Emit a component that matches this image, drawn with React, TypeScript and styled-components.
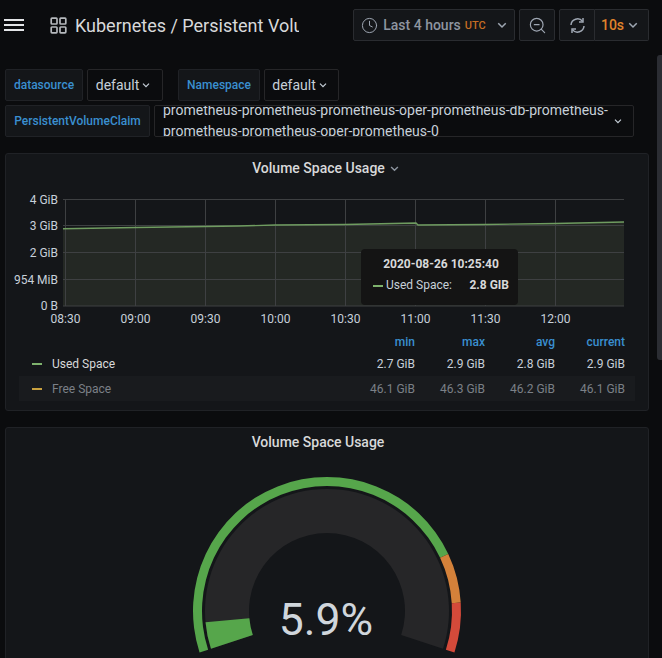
import { FC } from "react";
import styled, { createGlobalStyle } from "styled-components";
import { Clock, ZoomOut } from "lucide-react";

const GlobalStyle = createGlobalStyle`
    html, body {
        margin:0;
        height:100%;
        background:#0b0c0e;
        overflow:hidden;
    }
    body {
        font-family:Roboto, "Liberation Sans", sans-serif;
        color:#c7d0d9;
    }
`

const Page = styled.div`
    width:662px;
    height:658px;
    overflow:hidden;
    position:relative;
    box-sizing:border-box;
    padding:9px 13px 0 5px;
`

const ScrollThumb = styled.div`
    position:absolute;
    right:0;
    top:55px;
    width:5px;
    height:305px;
    border-radius:3px 0 0 3px;
    background:#2b2d33;
`

const NavBar = styled.header`
    display:flex;
    align-items:center;
    height:32px;
`

const MenuButton = styled.div`
    width:20px;
    height:12px;
    margin:-1px 26px 0 -1px;
    border-top:2px solid #e4e6e8;
    border-bottom:2px solid #e4e6e8;
    box-sizing:border-box;
    position:relative;
    &::after {
        content:"";
        position:absolute;
        left:0;
        right:0;
        top:3px;
        height:2px;
        background:#e4e6e8;
    }
`

const Crumb = styled.h1`
    margin:2px 0 0 8px;
    width:224px;
    overflow:hidden;
    white-space:nowrap;
    font-size:18px;
    font-weight:400;
    line-height:32px;
    color:#d8d9da;
`

const NavActions = styled.div`
    display:flex;
    gap:4px;
    margin-left:auto;
`

const NavButton = styled.div<{ width: number; trim?: number }>`
    width:${(props)=>props.width}px;
    height:32px;
    box-sizing:border-box;
    padding-right:${(props)=>props.trim ?? 0}px;
    display:flex;
    align-items:center;
    justify-content:center;
    background:#141619;
    border:1px solid #2a2c30;
    border-radius:2px;
    color:#9fa7b3;
    font-size:14px;
    font-weight:500;
`

const TimeText = styled.span`
    color:#8e95a0;
    margin-left:5px;
`

const UtcText = styled.span`
    color:#c56d23;
    font-size:11px;
    font-weight:500;
    margin:1px 0 0 4px;
`

const PickerCaret = styled.span`
    display:flex;
    margin-left:11px;
`

const RefreshGroup = styled.div`
    display:flex;
    & > div:first-child {
        border-radius:2px 0 0 2px;
    }
    & > div:last-child {
        border-left:none;
        border-radius:0 2px 2px 0;
    }
`

const IntervalText = styled.span`
    color:#e0842b;
    font-weight:500;
    font-size:14px;
    margin-right:4px;
`

const VariableArea = styled.section`
    display:flex;
    flex-direction:column;
    gap:4px;
    margin-top:28px;
    margin-bottom:16px;
`

const VariableRow = styled.div`
    display:flex;
`

const VariableLabel = styled.div<{ width: number }>`
    width:${(props)=>props.width}px;
    height:32px;
    box-sizing:border-box;
    margin-right:4px;
    display:flex;
    align-items:center;
    justify-content:center;
    background:#141619;
    border:1px solid #202226;
    border-radius:2px;
    color:#3a8fd0;
    font-size:12px;
    font-weight:500;
`

const VariableSelect = styled.div<{ width: number; after?: number }>`
    width:${(props)=>props.width}px;
    height:32px;
    box-sizing:border-box;
    margin-right:${(props)=>props.after ?? 0}px;
    padding-right:4px;
    display:flex;
    align-items:center;
    justify-content:center;
    gap:3px;
    background:#0b0c0e;
    border:1px solid #262628;
    border-radius:2px;
    color:#c7d0d9;
    font-size:14px;
`

const LongSelect = styled(VariableSelect)`
    justify-content:space-between;
    padding:0 11px 0 8px;
    overflow:hidden;
`

const LongValue = styled.div`
    width:452px;
    line-height:21px;
    font-size:14px;
`

const Panel = styled.section<{ height: number }>`
    height:${(props)=>props.height}px;
    box-sizing:border-box;
    margin-bottom:16px;
    background:#141619;
    border:1px solid #202226;
    border-radius:3px;
    width:644px;
`

const PanelTitle = styled.div<{ inset: number }>`
    height:28px;
    display:flex;
    align-items:center;
    justify-content:center;
    gap:5px;
    font-size:14px;
    font-weight:500;
    color:#d8d9da;
    padding-right:${(props)=>props.inset}px;
`

const ChartBox = styled.div`
    position:relative;
    height:147px;
`

const ChartSvg = styled.svg`
    display:block;
    width:642px;
    height:147px;
    font-family:Roboto, sans-serif;
    font-size:12px;
`

const Tooltip = styled.div`
    position:absolute;
    left:355px;
    top:67px;
    width:157px;
    height:56px;
    box-sizing:border-box;
    padding:7px 9px 0 12px;
    background:#141414;
    border-radius:4px;
    font-size:12px;
`

const TooltipTime = styled.div`
    text-align:center;
    font-weight:700;
    color:#d8d9da;
    line-height:17px;
    margin-bottom:4px;
`

const TooltipRow = styled.div`
    display:flex;
    align-items:center;
    line-height:17px;
    color:#c7d0d9;
`

const TooltipValue = styled.span`
    margin-left:auto;
    font-weight:700;
    color:#d8d9da;
`

const SeriesDash = styled.i<{ color: string }>`
    display:block;
    width:10px;
    height:2px;
    margin-right:3px;
    background:${(props)=>props.color};
`

const Legend = styled.div`
    margin:0 13px;
    font-size:12px;
`

const LegendRow = styled.div<{ striped?: boolean; dim?: boolean; rowHeight: number }>`
    display:grid;
    grid-template-columns:1fr 70px 70px 70px 70px;
    align-items:center;
    height:${(props)=>props.rowHeight}px;
    padding:0 10px 0 13px;
    background:${(props)=>props.striped ? "#191b1e" : "transparent"};
    color:${(props)=>props.dim ? "#7b8087" : "#d8d9da"};
    text-align:right;
`

const LegendName = styled.div`
    display:flex;
    align-items:center;
    text-align:left;
`

const LegendDash = styled(SeriesDash)`
    margin-right:10px;
`

const LegendHead = styled.div`
    color:#3a8fd0;
    font-weight:500;
    margin-top:4px;
`

const LegendCell = styled.div<{ dim?: boolean }>`
    color:${(props)=>props.dim ? "#7b8087" : "#c7d0d9"};
`

const GaugeSvg = styled.svg`
    display:block;
    width:642px;
    height:205px;
    font-family:Roboto, sans-serif;
`

const Chevron:FC<{ size?: number; color?: string }> = ({size=8,color="currentColor"})=>{
    return (
        <svg width={size} height={size} viewBox="0 0 8 8" fill="none">
            <path d="M1 2.6 L4 5.6 L7 2.6" stroke={color} strokeWidth="1.2" />
        </svg>
    )
}

const GridIcon:FC = ()=>{
    return (
        <svg width="17" height="17" viewBox="0 0 17 17" fill="none" stroke="#b5b8bc" strokeWidth="1.7">
            <rect x="1.2" y="1.2" width="5.8" height="5.8" rx="0.8" />
            <rect x="10" y="1.2" width="5.8" height="5.8" rx="0.8" />
            <rect x="1.2" y="10" width="5.8" height="5.8" rx="0.8" />
            <rect x="10" y="10" width="5.8" height="5.8" rx="0.8" />
        </svg>
    )
}

const SyncIcon:FC = ()=>{
    return (
        <svg width="17" height="17" viewBox="0 0 17 17" fill="none" stroke="#9fa7b3" strokeWidth="1.5">
            <path d="M2 8 A6.5 6.5 0 0 1 13.6 4.4" />
            <path d="M14 1 L14 5 L10 5" />
            <path d="M15 9 A6.5 6.5 0 0 1 3.4 12.6" />
            <path d="M3 16 L3 12 L7 12" />
        </svg>
    )
}

const xLines = [65.5,135.5,205.5,275.5,345.5,415.5,485.5,555.5];
const xLabels = ["08:30","09:00","09:30","10:00","10:30","11:00","11:30","12:00"];
const yLines = [
    {y:199.5,label:"4 GiB"},
    {y:225.5,label:"3 GiB"},
    {y:252.5,label:"2 GiB"},
    {y:279.5,label:"954 MiB"},
    {y:306,label:"0 B"},
];
const linePoints = "63,228.7 135,227.5 205,226.5 239,226 275,225 345,224.5 416,223 418,225 485,224.5 555,223.5 624,222";

const Chart:FC = ()=>{
    // svg coordinates are page coordinates, the viewBox is the box origin
    return (
        <ChartSvg viewBox="6 182 642 147">
            <polygon points={`${linePoints} 624,306 63,306`} fill="#242824" />
            {xLines.map((x)=><line key={x} x1={x} x2={x} y1={199} y2={306} stroke="#3e4042" />)}
            {yLines.map((l)=><line key={l.y} x1={63} x2={624} y1={l.y} y2={l.y} stroke="#3e4042" />)}
            <polyline points={linePoints} fill="none" stroke="#6f9c60" strokeWidth="1.4" />
            {yLines.map((l)=><text key={l.label} x={58} y={l.y+4} textAnchor="end" fill="#c7d0d9">{l.label}</text>)}
            {xLabels.map((t,i)=><text key={t} x={xLines[i]} y={323} textAnchor="middle" fill="#c7d0d9">{t}</text>)}
        </ChartSvg>
    )
}

const polar = (cx:number,cy:number,r:number,deg:number)=>{
    const a = (deg*Math.PI)/180;
    return [cx+r*Math.cos(a),cy+r*Math.sin(a)];
}

// annular sector, angles in degrees clockwise from +x
const sector = (cx:number,cy:number,r0:number,r1:number,from:number,to:number)=>{
    const [ax,ay] = polar(cx,cy,r1,from);
    const [bx,by] = polar(cx,cy,r1,to);
    const [dx,dy] = polar(cx,cy,r0,to);
    const [ex,ey] = polar(cx,cy,r0,from);
    const large = to-from>180 ? 1 : 0;
    return `M${ax} ${ay} A${r1} ${r1} 0 ${large} 1 ${bx} ${by} L${dx} ${dy} A${r0} ${r0} 0 ${large} 0 ${ex} ${ey} Z`;
}

const START = 162;
const SWEEP = 216;
const at = (pct:number)=>START+SWEEP*pct/100;

const Gauge:FC = ()=>{
    const cx = 321;
    const cy = 155;
    return (
        <GaugeSvg viewBox="0 0 642 205">
            <path d={sector(cx,cy,78,122,at(0),at(100))} fill="#262628" />
            <path d={sector(cx,cy,78,122,at(0),at(5.9))} fill="#56a64b" />
            <path d={sector(cx,cy,125,134,at(0),at(80))} fill="#56a64b" />
            <path d={sector(cx,cy,125,134,at(80),at(90))} fill="#d4813a" />
            <path d={sector(cx,cy,125,134,at(90),at(100))} fill="#d44a3a" />
            <text x={cx-1} y={179} textAnchor="middle" fontSize="44.5" fill="#d0d6dc">5.9%</text>
        </GaugeSvg>
    )
}

const legendRows = [
    {name:"Used Space",color:"#7eb26d",values:["2.7 GiB","2.9 GiB","2.8 GiB","2.9 GiB"]},
    {name:"Free Space",color:"#c9a13f",values:["46.1 GiB","46.3 GiB","46.2 GiB","46.1 GiB"],dim:true},
];

const App:FC = ()=>{
    return (
        <Page>
            <GlobalStyle />
            <ScrollThumb />
            <NavBar>
                <MenuButton />
                <GridIcon />
                <Crumb>Kubernetes / Persistent Volume</Crumb>
                <NavActions>
                    <NavButton width={162}>
                        <Clock size={17} strokeWidth={1.4} />
                        <TimeText>Last 4 hours</TimeText>
                        <UtcText>UTC</UtcText>
                        <PickerCaret><Chevron size={10} /></PickerCaret>
                    </NavButton>
                    <NavButton width={36}><ZoomOut size={19} strokeWidth={1.5} /></NavButton>
                    <RefreshGroup>
                        <NavButton width={36}><SyncIcon /></NavButton>
                        <NavButton width={54} trim={4}>
                            <IntervalText>10s</IntervalText>
                            <Chevron size={10} />
                        </NavButton>
                    </RefreshGroup>
                </NavActions>
            </NavBar>
            <VariableArea>
                <VariableRow>
                    <VariableLabel width={78}>datasource</VariableLabel>
                    <VariableSelect width={76} after={15}>default<Chevron /></VariableSelect>
                    <VariableLabel width={82}>Namespace</VariableLabel>
                    <VariableSelect width={75}>default<Chevron /></VariableSelect>
                </VariableRow>
                <VariableRow>
                    <VariableLabel width={145}>PersistentVolumeClaim</VariableLabel>
                    <LongSelect width={480}>
                        <LongValue>prometheus-prometheus-prometheus-oper-prometheus-db-prometheus-prometheus-prometheus-oper-prometheus-0</LongValue>
                        <Chevron />
                    </LongSelect>
                </VariableRow>
            </VariableArea>
            <Panel height={258}>
                <PanelTitle inset={3}>Volume Space Usage <Chevron size={9} color="#8e95a0" /></PanelTitle>
                <ChartBox>
                    <Chart />
                    <Tooltip>
                        <TooltipTime>2020-08-26 10:25:40</TooltipTime>
                        <TooltipRow>
                            <SeriesDash color="#7eb26d" />
                            Used Space:
                            <TooltipValue>2.8 GIB</TooltipValue>
                        </TooltipRow>
                    </Tooltip>
                </ChartBox>
                <Legend>
                    <LegendRow rowHeight={22}>
                        <span />
                        <LegendHead>min</LegendHead>
                        <LegendHead>max</LegendHead>
                        <LegendHead>avg</LegendHead>
                        <LegendHead>current</LegendHead>
                    </LegendRow>
                    {legendRows.map((row,i)=>(
                        <LegendRow key={row.name} rowHeight={25} striped={i===1} dim={row.dim}>
                            <LegendName>
                                <LegendDash color={row.color} />
                                {row.name}
                            </LegendName>
                            {row.values.map((v,j)=><LegendCell key={j} dim={row.dim}>{v}</LegendCell>)}
                        </LegendRow>
                    ))}
                </Legend>
            </Panel>
            <Panel height={300}>
                <PanelTitle inset={18}>Volume Space Usage</PanelTitle>
                <Gauge />
            </Panel>
        </Page>
    )
}
export default App;
